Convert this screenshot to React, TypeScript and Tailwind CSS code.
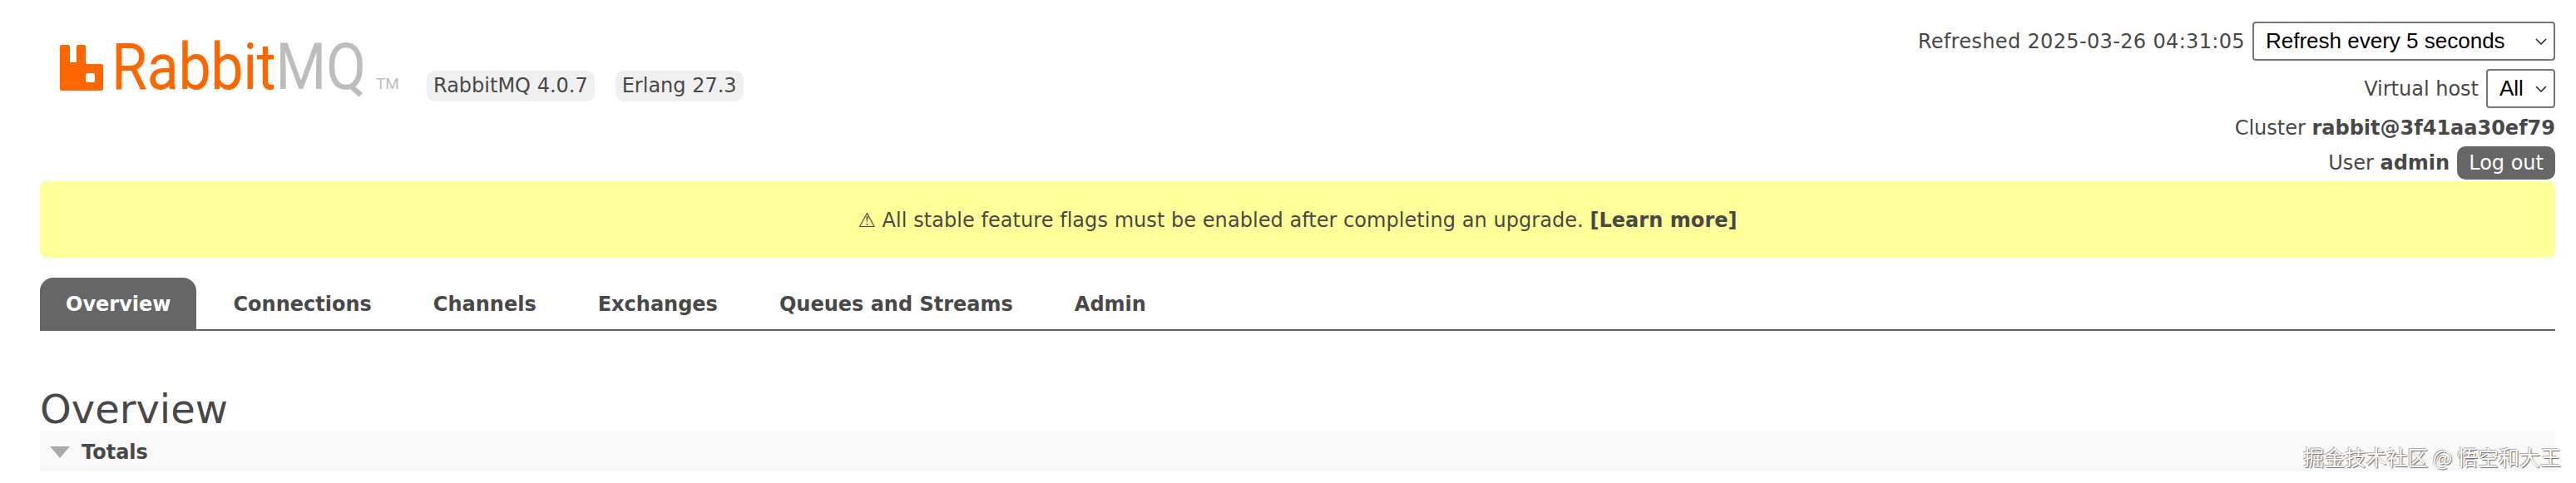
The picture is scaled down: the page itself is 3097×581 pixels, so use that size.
import React from 'react';

const tabs = ['Connections', 'Channels', 'Exchanges', 'Queues and Streams', 'Admin'];

const Chevron: React.FC = () => (
  <svg width="14" height="8" viewBox="0 0 14 8" className="pointer-events-none absolute right-[10px] top-[20px]">
    <path d="M1 1l6 6 6-6" fill="none" stroke="#222222" strokeWidth="1.5" />
  </svg>
);

const Logo: React.FC = () => (
  <div className="flex items-start w-[441px] h-[55px]">
    <svg width="52" height="55" viewBox="0 0 52 55" className="shrink-0">
      <path
        fillRule="evenodd"
        fill="#ff6600"
        d="M2 0h8a2 2 0 0 1 2 2v19h8V2a2 2 0 0 1 2-2h7a2 2 0 0 1 2 2v21h19a2 2 0 0 1 2 2v28a2 2 0 0 1-2 2H2a2 2 0 0 1-2-2V2a2 2 0 0 1 2-2zM33 34a2 2 0 0 0-2 2v7a2 2 0 0 0 2 2h7a2 2 0 0 0 2-2v-7a2 2 0 0 0-2-2z"
      />
    </svg>
    <span className="ml-[10px] flex items-baseline font-['Roboto',sans-serif] text-[77px] leading-[55px]">
      <span className="inline-block w-[308px] origin-left scale-x-[0.91] whitespace-nowrap tracking-[-0.5px]">
        <span className="text-[#ff6600]">Rabbit</span>
        <span className="text-[#bdbdbd]">MQ</span>
      </span>
      <span className="ml-[10px] text-[19px] text-[#bdbdbd]">TM</span>
    </span>
  </div>
);

export default function App() {
  return (
    <div className="relative min-h-[581px] bg-white pl-[48px] pr-[25px] font-['DejaVu_Sans',sans-serif] text-[24px] text-[#484848]">
      <header className="flex justify-between h-[218px]">
        <div className="flex items-start pt-[54px] pl-[24px]">
          <Logo />
          <div className="flex gap-[25px] mt-[31px]">
            <span className="rounded-[10px] bg-[#f0f0f0] px-[8px] h-[37px] leading-[37px]">RabbitMQ 4.0.7</span>
            <span className="rounded-[10px] bg-[#f0f0f0] px-[8px] h-[37px] leading-[37px]">Erlang 27.3</span>
          </div>
        </div>
        <div className="flex flex-col items-end">
          <div className="flex items-center gap-[9px] mt-[26px] h-[47px]">
            <span className="tracking-[0.35px]">Refreshed 2025-03-26 04:31:05</span>
            <div className="relative">
              <select className="block h-[47px] w-[364px] appearance-none rounded-[4px] border-2 border-[#767676] bg-white pl-[14px] font-['Liberation_Sans',sans-serif] text-[26px] text-black">
                <option>Refresh every 5 seconds</option>
              </select>
              <Chevron />
            </div>
          </div>
          <div className="flex items-center gap-[9px] mt-[10px] h-[47px]">
            <span>Virtual host</span>
            <div className="relative">
              <select className="block h-[47px] w-[83px] appearance-none rounded-[4px] border-2 border-[#767676] bg-white pl-[14px] font-['Liberation_Sans',sans-serif] text-[26px] text-black">
                <option>All</option>
              </select>
              <Chevron />
            </div>
          </div>
          <div className="mt-[6px] h-[36px] leading-[36px]">
            Cluster <b>rabbit@3f41aa30ef79</b>
          </div>
          <div className="flex items-center gap-[9px] mt-[4px]">
            <span>
              User <b>admin</b>
            </span>
            <button className="h-[40px] rounded-[10px] bg-[#666666] px-[14px] text-white">Log out</button>
          </div>
        </div>
      </header>

      <div className="flex h-[92px] items-center justify-center rounded-[8px] bg-[#ffff99] pt-[2px] tracking-[0.05px]">
        <span>
          ⚠ All stable feature flags must be enabled after completing an upgrade. <b>[Learn more]</b>
        </span>
      </div>

      <nav className="mt-[24px] flex h-[64px] border-b-2 border-[#666666] font-bold">
        <a className="flex h-[62px] items-center rounded-t-[16px] bg-[#666666] px-[31px] pt-[2px] text-white">Overview</a>
        <div className="flex pl-[7px]">
          {tabs.map(t => (
            <a key={t} className="flex items-center px-[37px] pt-[2px]">
              {t}
            </a>
          ))}
        </div>
      </nav>

      <h1 className="mt-[69px] h-[52px] text-[48px] leading-[51px] text-[#484848]">Overview</h1>

      <div className="flex h-[48px] items-center bg-[#f8f8f8] pl-[12px] pt-[2px] font-bold">
        <svg width="24" height="14" viewBox="0 0 24 14" className="mr-[14px]">
          <path d="M0 0h24L12 14z" fill="#aaaaaa" />
        </svg>
        Totals
      </div>

      <div className="absolute right-[18px] top-[532px] font-['Noto_Sans_CJK_SC',sans-serif] text-[25px] leading-[34px] text-white [text-shadow:1px_1px_1px_#666,-1px_-1px_0_#aaa]">
        掘金技术社区 @ 悟空和大王
      </div>
    </div>
  );
}
